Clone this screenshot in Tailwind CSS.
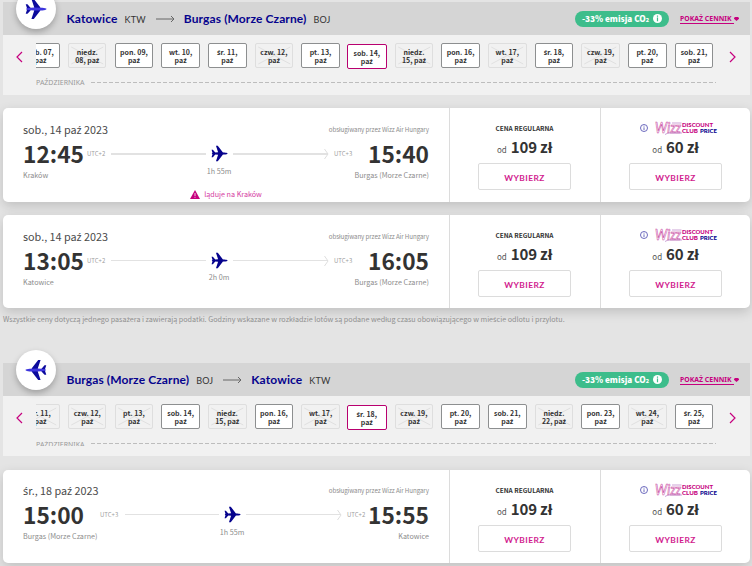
<!DOCTYPE html>
<html lang="pl">
<head>
<meta charset="utf-8">
<title>Wizz Air</title>
<script src="https://cdn.jsdelivr.net/npm/@tailwindcss/browser@4"></script>
</head>
<body class="h-[566px] w-[752px] overflow-hidden bg-[#e4e4e4] font-['Noto_Sans_CJK_SC','Noto_Sans',sans-serif] text-[#333]">
<main id="app" class="flex h-[566px] w-[752px] flex-col overflow-hidden pl-[3px] pr-[2px] pt-[2px]"></main>
<script>
// Polish letters missing from the main family are set in Noto Sans.
const t = (s) => s.replace(/[ąćęłńśźżŁŻŹ]+/g, (m) => `<span class="font-['Noto_Sans',sans-serif]">${m}</span>`);

const plane = (cls, body, wings) => `<svg class="${cls}" viewBox="0 0 24 24"><path fill="${wings}" d="M7 1h2.600l7 9.200v3.600L9.600 23H7l3-9.200V10.200zM.8 6.800h1.900L6 10.500v3L2.700 17.200H.8l1.300-4V10.800z"/><path fill="${body}" d="M1 12l1.500-1.200L10 10.400l9 .1c2.300.2 4 .6 4.600 1.500-.6.900-2.300 1.300-4.600 1.500l-9 .1-7.500-.4z"/></svg>`;

const flag = (first) => `<div class="absolute left-[13px] top-[-13px] flex size-[40px] items-center justify-center rounded-full bg-white shadow-[0_3px_6px_rgba(0,0,0,0.25)]">${plane(first ? 'size-[22px]' : 'size-[22px] -scale-x-100', '#3d35dd', '#0b0a9c')}</div>`;

const heading = (from, fc, to, tc, first) => `
<header class="relative flex h-[33px] shrink-0 items-center bg-[#d5d5d5] pl-[63.500px] font-[Lato,sans-serif]">
  ${flag(first)}
  <span class="text-[12px] font-bold leading-[14px] whitespace-nowrap text-[#06038d] tracking-[0.110px]">${from}</span>
  <span class="ml-[7px] mt-[2px] text-[9px] leading-[12px] tracking-[0.2px]">${fc}</span>
  <svg class="ml-[10px] mr-[9px] h-[8px] w-[19px] shrink-0" viewBox="0 0 19 8" fill="none" stroke="#666"><path d="M0 4h18M15 1l3 3-3 3"/></svg>
  <span class="text-[12px] font-bold leading-[14px] whitespace-nowrap text-[#06038d] tracking-[0.110px]">${to}</span>
  <span class="ml-[7px] mt-[2px] text-[9px] leading-[12px] tracking-[0.2px]">${tc}</span>
  <div class="ml-auto flex h-[16px] w-[94px] items-center justify-center rounded-full bg-[#3dbd8b] font-['Noto_Sans_CJK_SC','Noto_Sans',sans-serif] text-[8.200px] font-black leading-[16px] whitespace-nowrap text-white"><span class="h-[17px]">-33% emisja CO<span class="text-[5.500px]">2</span></span>
    <svg class="ml-[4px] size-[9px]" viewBox="0 0 9 9"><circle cx="4.500" cy="4.500" r="4.500" fill="#fff"/><path d="M4.500 1.600v1.200M4.500 3.600v3.700" stroke="#3dbd8b" stroke-width="1.200"/></svg>
  </div>
  <div class="ml-[11px] mr-[11px] flex w-[59px] items-center text-[#c6007e]"><span class="h-[10px] w-[54px] shrink-0 border-b border-[#c6007e] font-['Noto_Sans',sans-serif] text-[6.900px] font-bold leading-[9px] whitespace-nowrap">POKAŻ CENNIK</span><svg class="mt-[1px] h-[4px] w-[5px] shrink-0" viewBox="0 0 5 4"><path fill="#c6007e" d="M0 1l1-1h3l1 1v.7L2.500 4 0 1.700z"/></svg></div>
</header>`;

const day = ([a, b, state]) => `<div class="relative flex shrink-0 flex-col items-center justify-center rounded-[2px] text-[7px] font-bold whitespace-nowrap ${state === 2 ? 'ml-[-1.250px] mr-[-0.250px] mt-px h-[25px] w-[40px] border border-[#b8006f] bg-white' : state === 1 ? 'h-[25px] w-[38.500px] border border-[#8d8f90] bg-white' : 'h-[25px] w-[38.500px] border border-[#dedede]'}">${state === 0 ? '<svg class="absolute inset-0 h-full w-full" viewBox="0 0 36 23" fill="none" stroke="#e0e0e0"><path d="M2 3l32 17M2 20L34 3"/></svg>' : ''}<span class="relative h-[8px] leading-[8px]">${t(a)}</span><span class="relative h-[8px] leading-[8px]">${t(b)}</span></div>`;

const arrow = (d) => `<svg class="h-[12px] w-[7px] shrink-0" viewBox="0 0 7 12" fill="none" stroke="#c6007e" stroke-width="1.200"><path d="${d}"/></svg>`;

const strip = (days, cut) => `
<section class="flex h-[60px] shrink-0 bg-[#f1f1f1]">
  <div class="flex w-[33px] shrink-0 pl-[13px] pt-[16px]">${arrow('M6 1L1 6l5 5')}</div>
  <div class="flex w-[681px] shrink-0 flex-col overflow-hidden pt-[8px]">
    <div class="-ml-[14.700px] flex h-[27px] shrink-0 gap-[8.180px]">${days.map(day).join('')}</div>
    <div class="mt-[7px] flex h-[10px] items-center gap-[6px]"><span class="w-[49px] overflow-hidden font-['Noto_Sans',sans-serif] text-[7px] whitespace-nowrap text-[#9a9a9a] ${cut ? 'h-[5px] leading-[7px]' : 'h-[10px] leading-[11px]'}">PAŹDZIERNIKA</span><svg class="h-px w-[625px]" viewBox="0 0 625 1"><path d="M0 .5h625" stroke="#bdbdbd" stroke-dasharray="4 2"/></svg></div>
  </div>
  <div class="pl-[12px] pt-[16px]">${arrow('M1 1l5 5-5 5')}</div>
</section>`;

const logo = `<svg class="h-[14px] w-[64px]" viewBox="0 0 64 14">
<text x="0" y="12" textLength="26" lengthAdjust="spacingAndGlyphs" font-family="Lato" font-size="14.500" font-style="italic" font-weight="400" fill="#fff" stroke="#c9489f" stroke-width=".6">Wizz</text>
<path d="M10 13.500l3-1.500h14M17 2h9.500" fill="none" stroke="#b77cc4" stroke-width=".7"/>
<g font-family="Lato" font-weight="900" font-size="6.200"><text x="27" y="6.300" textLength="31" lengthAdjust="spacingAndGlyphs" fill="#c6007e">DISCOUNT</text><text x="27" y="11.800" textLength="16" lengthAdjust="spacingAndGlyphs" fill="#c6007e">CLUB</text><text x="45" y="11.800" textLength="17" lengthAdjust="spacingAndGlyphs" fill="#06038d">PRICE</text></g></svg>`;

const price = (head, amount, wide) => `
<div class="flex flex-col items-center border-l border-[#dcdcdc] ${wide ? 'w-[151px] pr-[1px]' : 'w-[150px]'}">
  <div class="mt-[13px] flex h-[14px] items-center">${head}</div>
  <div class="mt-[4px] flex h-[16px] items-baseline gap-[4px] leading-[16px]"><span class="text-[8px] text-[#555]">od</span><span class="text-[15px] font-bold tracking-[-0.150px] whitespace-nowrap">${amount} ${t('zł')}</span></div>
  <button class="mt-[8px] flex h-[27px] w-[93px] items-center justify-center rounded-[2px] border border-[#dcdcdc] pt-[3px] font-[Lato,sans-serif] text-[8.400px] font-bold leading-[12px] tracking-[0.4px] text-[#d11c8e]">WYBIERZ</button>
</div>`;

const flight = (f) => `
<article class="flex shrink-0 rounded-[5px] bg-white shadow-[0_4px_12px_rgba(0,0,0,0.16)] ${f.cls}">
  <div class="flex w-[446px] shrink-0 flex-col pl-[20px] pr-[20px]">
    <div class="flex h-[19px] items-center justify-between ${f.top}"><span class="text-[10.800px] leading-[18px] whitespace-nowrap text-[#4a4a4a]">${t(f.date)}</span><span class="text-[6.200px] leading-[18px] tracking-[-0.080px] whitespace-nowrap text-[#8c8c8c]">${t('obsługiwany')} przez Wizz Air Hungary</span></div>
    <div class="flex h-[29px] items-center">
      <span class="w-[62px] shrink-0 text-[22.700px] font-bold leading-[29px]">${f.dep}</span>
      <span class="w-[18px] shrink-0 text-[6px] whitespace-nowrap text-[#a0a0a0] ${f.gapA}">${f.tzA}</span>
      <i class="shrink-0 bg-[#e2e2e2] ${f.line}"></i>
      ${plane('mx-[5px] size-[17px] shrink-0', '#06038d', '#06038d')}
      <i class="w-[95px] shrink-0 bg-[#e2e2e2] ${f.lineB}"></i>
      <svg class="-ml-[4px] h-[12px] w-[5px] shrink-0" viewBox="0 0 5 12" fill="none" stroke="#dedede"><path d="M.5 1l3.500 5-3.500 5"/></svg>
      <span class="ml-[5px] w-[18px] shrink-0 text-[6px] whitespace-nowrap text-[#a0a0a0]">${f.tzB}</span>
      <span class="ml-auto shrink-0 text-right text-[22.700px] font-bold leading-[29px]">${f.arr}</span>
    </div>
    <div class="relative flex h-[14px] items-center justify-between text-[7.200px] whitespace-nowrap text-[#8c8c8c]"><span>${t(f.a)}</span><span>${t(f.b)}</span><span class="absolute -translate-x-1/2 leading-[14px] ${f.mid}">${f.time}</span></div>
    ${f.warn ? `<div class="mt-[6px] flex h-[13px] items-center justify-center text-[7.200px] whitespace-nowrap text-[#d53aa2]"><svg class="mr-[4px] h-[9px] w-[10px]" viewBox="0 0 10 9"><path fill="#c6007e" d="M5 0l5 9H0z"/><path stroke="#fff" stroke-width=".8" d="M5 3v3M5 6.800v.9"/></svg><span>${t(f.warn)}</span></div>` : ''}
  </div>
  ${price(`<span class="mt-[2px] text-[6.500px] font-bold whitespace-nowrap">CENA REGULARNA</span>`, 109, true)}
  ${price(`<svg class="ml-[8px] mr-[7px] size-[8px]" viewBox="0 0 8 8" fill="none" stroke="#5c59b5" stroke-width=".9"><circle cx="4" cy="4" r="3.500"/><path d="M4 1.800v.8M4 3.300v2.700"/></svg>${logo}`, 60, false)}
</article>`;

const p = 'paź';
const std = { top: 'mt-[12px]', gapA: 'ml-[2px] mr-[6px]', mid: 'left-[196px] top-[-4px]', line: 'h-px w-[95px]', lineB: 'h-px' };
document.getElementById('app').innerHTML =
  heading('Katowice', 'KTW', 'Burgas (Morze Czarne)', 'BOJ', true) +
  strip([['sob. 07,', p, 1], ['niedz.', '08, paź', 0], ['pon. 09,', p, 1], ['wt. 10,', p, 1], ['śr. 11,', p, 1], ['czw. 12,', p, 0], ['pt. 13,', p, 1], ['sob. 14,', p, 2], ['niedz.', '15, paź', 0], ['pon. 16,', p, 1], ['wt. 17,', p, 0], ['śr. 18,', p, 1], ['czw. 19,', p, 0], ['pt. 20,', p, 1], ['sob. 21,', p, 1]], false) +
  flight({ ...std, cls: 'mt-[13px] h-[94px]', date: 'sob., 14 paź 2023', dep: '12:45', arr: '15:40', tzA: 'UTC+2', tzB: 'UTC+3', a: 'Kraków', b: 'Burgas (Morze Czarne)', time: '1h 55m', warn: 'ląduje na Kraków', line: 'h-[2px] w-[95px]', lineB: 'h-[2px]' }) +
  flight({ ...std, cls: 'mt-[13px] h-[93px]', date: 'sob., 14 paź 2023', dep: '13:05', arr: '16:05', tzA: 'UTC+2', tzB: 'UTC+3', a: 'Katowice', b: 'Burgas (Morze Czarne)', time: '2h 0m', mid: 'left-[196px] top-[-5px]' }) +
  `<p class="mt-[5px] h-[12px] shrink-0 text-[7.180px] leading-[12px] whitespace-nowrap text-[#8f8f8f]">${t('Wszystkie ceny dotyczą jednego pasażera i zawierają podatki. Godziny wskazane w rozkładzie lotów są podane według czasu obowiązującego w mieście odlotu i przylotu.')}</p><div class="h-[38px] shrink-0"></div>` +
  heading('Burgas (Morze Czarne)', 'BOJ', 'Katowice', 'KTW', false) +
  strip([['śr. 11,', p, 0], ['czw. 12,', p, 0], ['pt. 13,', p, 0], ['sob. 14,', p, 1], ['niedz.', '15, paź', 0], ['pon. 16,', p, 1], ['wt. 17,', p, 0], ['śr. 18,', p, 2], ['czw. 19,', p, 0], ['pt. 20,', p, 1], ['sob. 21,', p, 1], ['niedz.', '22, paź', 0], ['pon. 23,', p, 1], ['wt. 24,', p, 0], ['śr. 25,', p, 1]], true) +
  flight({ ...std, cls: 'mt-[14px] h-[93px]', top: 'mt-[11px]', date: 'śr., 18 paź 2023', dep: '15:00', arr: '15:55', tzA: 'UTC+3', tzB: 'UTC+2', a: 'Burgas (Morze Czarne)', b: 'Katowice', time: '1h 55m', line: 'h-px w-[94px]', gapA: 'ml-[15px] mr-[7px]', mid: 'left-[209px] top-[-4px]' });
</script>
</body>
</html>
